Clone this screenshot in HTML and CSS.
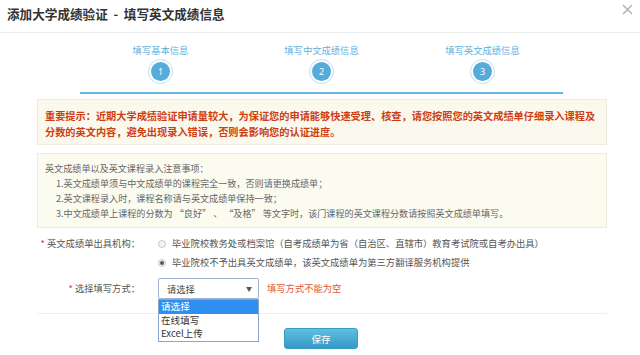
FILE: index.html
```html
<!DOCTYPE html>
<html lang="zh-CN">
<head>
<meta charset="utf-8">
<title>添加大学成绩验证</title>
<link rel="stylesheet" href="styles.css">
</head>
<body>
<div class="dialog">
  <div class="header">
    <h1 class="title">添加大学成绩验证&nbsp; - &nbsp;填写英文成绩信息</h1>
    <span class="close">
      <svg width="11" height="11" viewBox="0 0 11 11"><path d="M1 1L10 10M10 1L1 10" stroke="#b5b5b5" stroke-width="1.6"/></svg>
    </span>
  </div>

  <div class="steps">
    <div class="step">
      <div class="step-label">填写基本信息</div>
      <div class="step-circle"><span>1</span></div>
    </div>
    <div class="step">
      <div class="step-label">填写中文成绩信息</div>
      <div class="step-circle"><span>2</span></div>
    </div>
    <div class="step">
      <div class="step-label">填写英文成绩信息</div>
      <div class="step-circle"><span>3</span></div>
    </div>
  </div>

  <div class="warning">重要提示：近期大学成绩验证申请量较大，为保证您的申请能够快速受理、核查，请您按照您的英文成绩单仔细录入课程及分数的英文内容，避免出现录入错误，否则会影响您的认证进度。</div>

  <div class="notes">
    <div>英文成绩单以及英文课程录入注意事项：</div>
    <div class="item">1.英文成绩单须与中文成绩单的课程完全一致，否则请更换成绩单；</div>
    <div class="item">2.英文课程录入时，课程名称请与英文成绩单保持一致；</div>
    <div class="item">3.中文成绩单上课程的分数为 “良好” 、 “及格” 等文字时，该门课程的英文课程分数请按照英文成绩单填写。</div>
  </div>

  <div class="form">
    <div class="row">
      <div class="label"><span class="req">*</span> 英文成绩单出具机构：</div>
      <div class="radios">
        <div class="radio"><span class="dot"></span>毕业院校教务处或档案馆（自考成绩单为省（自治区、直辖市）教育考试院或自考办出具）</div>
        <div class="radio"><span class="dot checked"></span>毕业院校不予出具英文成绩单，该英文成绩单为第三方翻译服务机构提供</div>
      </div>
    </div>
    <div class="row row-select">
      <div class="label"><span class="req">*</span> 选择填写方式：</div>
      <div class="select-wrap">
        <div class="select"><span>请选择</span><span class="arrow">▼</span></div>
        <div class="dropdown">
          <div class="opt active">请选择</div>
          <div class="opt">在线填写</div>
          <div class="opt">Excel上传</div>
        </div>
      </div>
      <div class="error">填写方式不能为空</div>
    </div>
  </div>

  <div class="divider"></div>
  <div class="actions"><button class="save">保存</button></div>
</div>
</body>
</html>
```

FILE: styles.css
```css
* { box-sizing: border-box; }
html, body { margin: 0; padding: 0; background: #fff; }
body {
  font-family: "Noto Sans CJK SC", "Microsoft YaHei", sans-serif;
  color: #333;
  width: 640px;
  height: 355px;
  overflow: hidden;
}
.header {
  height: 33px;
  border-bottom: 1px solid #ececec;
  display: flex;
  justify-content: space-between;
  align-items: flex-start;
  padding: 0 7px 0 7px;
}
.title {
  margin: 0;
  font-size: 12.6px;
  font-weight: bold;
  line-height: 28px;
  color: #333;
}
.close { padding-top: 4px; line-height: 0; }

.steps {
  position: relative;
  display: flex;
  margin: 0 77px 0 80px;
  padding-top: 10px;
}
.steps::before {
  content: "";
  position: absolute;
  left: 0; right: 0;
  top: 59px;
  height: 2px;
  background: #69b9e2;
}
.step {
  flex: 1;
  display: flex;
  flex-direction: column;
  align-items: center;
  position: relative;
}
.step-label {
  font-size: 9.3px;
  line-height: 14px;
  color: #5fb0da;
}
.step-circle {
  margin-top: 2px;
  width: 25px; height: 25px;
  border-radius: 50%;
  background: #fff;
  border: 1px solid #bfe0f1;
  display: flex;
  align-items: center;
  justify-content: center;
}
.step-circle span {
  width: 19px; height: 19px;
  border-radius: 50%;
  background: #55acd9;
  color: #fff;
  font-size: 9px;
  line-height: 19px;
  text-align: center;
  font-family: "Noto Sans", sans-serif;
}

.warning {
  margin: 15px 33px 0 37px;
  background: #fbf9ee;
  border: 1px solid #efeadc;
  padding: 8px 7px 4px 7px;
  font-size: 10.2px;
  line-height: 16px;
  font-weight: bold;
  color: #cf3e12;
}
.notes {
  margin: 8px 33px 0 37px;
  background: #fcfbf0;
  border: 1px solid #efeadc;
  padding: 7px 7px 6px 7px;
  font-size: 9.1px;
  line-height: 15px;
  color: #666;
}
.notes .item { padding-left: 11px; }

.form {
  margin: 6px 0 0 37px;
  font-size: 9.3px;
  color: #555;
}
.row { display: flex; align-items: flex-start; }
.label {
  width: 103px;
  text-align: right;
  line-height: 19px;
  color: #555;
}
.req { color: #e4393c; }
.radios { margin-left: 18px; }
.radio {
  display: flex;
  align-items: center;
  line-height: 19px;
  color: #555;
}
.dot {
  width: 8px; height: 8px;
  border-radius: 50%;
  border: 1px solid #c8c8c8;
  background: #f3f3f3;
  margin-right: 6px;
  display: inline-flex;
  align-items: center;
  justify-content: center;
}
.dot.checked::after {
  content: "";
  width: 4px; height: 4px;
  border-radius: 50%;
  background: #555;
}

.row-select { margin-top: 6px; align-items: center; }
.row-select .label { line-height: 21px; }
.select-wrap { position: relative; margin-left: 18px; }
.select {
  width: 101px;
  height: 21px;
  border: 1px solid #9fb3cf;
  border-radius: 2px;
  display: flex;
  justify-content: space-between;
  align-items: center;
  padding: 0 6px 0 8px;
  color: #444;
  background: #fff;
}
.arrow { font-size: 6px; color: #555; }
.dropdown {
  position: absolute;
  left: 0; top: 21px;
  width: 101px;
  background: #fff;
  border: 1px solid #8aa6c9;
  z-index: 5;
}
.opt {
  height: 13.5px;
  line-height: 13.5px;
  padding-left: 2px;
  font-size: 9.6px;
  color: #333;
}
.opt.active { background: #2f8ff0; color: #fff; }
.error {
  margin-left: 8px;
  color: #e0573a;
  line-height: 21px;
}

.divider {
  margin: 14px 33px 0 37px;
  border-top: 1px solid #f0f0f0;
}
.actions {
  display: flex;
  justify-content: center;
  padding-top: 14px;
  padding-left: 2px;
}
.save {
  width: 74px;
  height: 21px;
  border: 1px solid #3a9cc6;
  border-radius: 3px;
  background: linear-gradient(#5ec0e3, #3599c4);
  color: #fff;
  font-family: "Noto Sans CJK SC", sans-serif;
  font-size: 9.6px;
  padding: 0;
}
```
